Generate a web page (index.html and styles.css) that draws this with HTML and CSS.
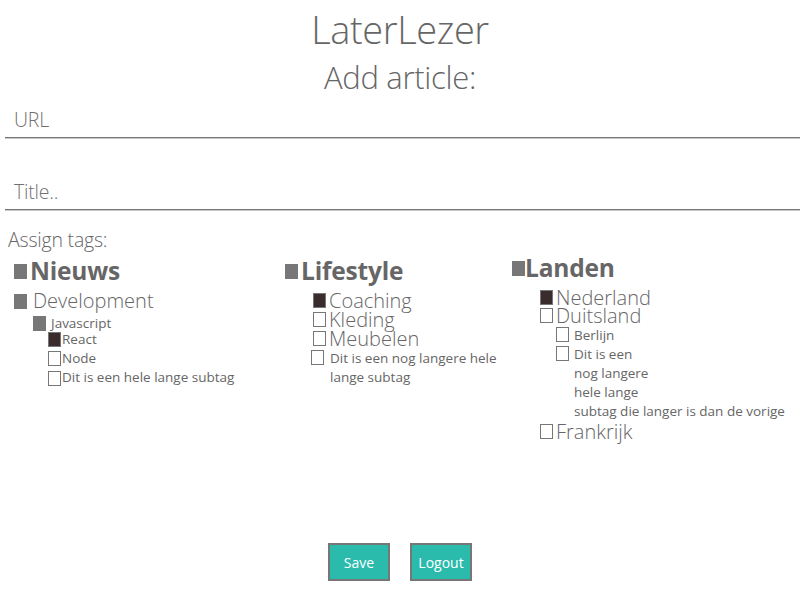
FILE: index.html
```html
<!DOCTYPE html>
<html>
<head>
<meta charset="utf-8">
<link rel="stylesheet" href="styles.css">
</head>
<body>
<h1 class="title">LaterLezer</h1>
<h2 class="subtitle">Add article:</h2>
<form class="form">
  <div class="field field-url"><span class="placeholder">URL</span></div>
  <div class="field field-title"><span class="placeholder">Title..</span></div>
  <p class="assign">Assign tags:</p>
  <div class="tags">
    <ul class="col col1">
      <li class="row l0"><span class="box grey"></span><span class="lbl">Nieuws</span></li>
      <li class="row l1"><span class="box grey"></span><span class="lbl">Development</span></li>
      <li class="row l2 js"><span class="box grey"></span><span class="lbl">Javascript</span></li>
      <li class="row l3 react"><span class="box dark"></span><span class="lbl">React</span></li>
      <li class="row l3"><span class="box"></span><span class="lbl">Node</span></li>
      <li class="row l3 top"><span class="box"></span><span class="lbl">Dit is een hele lange subtag</span></li>
    </ul>
    <ul class="col col2">
      <li class="row l0"><span class="box grey"></span><span class="lbl">Lifestyle</span></li>
      <li class="row m1 first"><span class="box dark"></span><span class="lbl">Coaching</span></li>
      <li class="row m1"><span class="box"></span><span class="lbl">Kleding</span></li>
      <li class="row m1"><span class="box"></span><span class="lbl">Meubelen</span></li>
      <li class="row m2"><span class="box"></span><span class="lbl">Dit is een nog langere hele lange subtag</span></li>
    </ul>
    <ul class="col col3">
      <li class="row l0"><span class="box grey"></span><span class="lbl">Landen</span></li>
      <li class="row m1 first"><span class="box dark"></span><span class="lbl">Nederland</span></li>
      <li class="row m1 second"><span class="box"></span><span class="lbl">Duitsland</span></li>
      <li class="row n2"><span class="box"></span><span class="lbl">Berlijn</span></li>
      <li class="row n2 long"><span class="box"></span><span class="lbl">Dit is een<br>nog langere<br>hele lange<br>subtag die langer is dan de vorige</span></li>
      <li class="row m1 last"><span class="box"></span><span class="lbl">Frankrijk</span></li>
    </ul>
  </div>
  <div class="actions">
    <button type="button" class="btn">Save</button>
    <button type="button" class="btn">Logout</button>
  </div>
</form>
</body>
</html>
```
FILE: styles.css
```css
html, body {
  margin: 0;
  padding: 0;
  background: #fff;
}
body {
  font-family: "Open Sans", "Noto Sans", sans-serif;
  color: #666;
  width: 800px;
  height: 600px;
  overflow: hidden;
}
.title {
  margin: 0;
  padding-top: 6px;
  text-align: center;
  font-weight: 300;
  font-size: 38px;
  line-height: 46px;
  letter-spacing: -0.4px;
}
.subtitle {
  margin: 7px 0 0;
  text-align: center;
  font-weight: 300;
  font-size: 31px;
  line-height: 36px;
  letter-spacing: -0.3px;
}
.form {
  margin: 0;
}
.field {
  margin-left: 5px;
  height: 35px;
  border-bottom: 1px solid #777;
  box-shadow: 0 1px 0 #c8c8c8;
  display: flex;
  align-items: center;
  padding-left: 9px;
}
.field-url {
  margin-top: 7px;
}
.field-title {
  margin-top: 36px;
}
.placeholder {
  font-size: 19.5px;
  font-weight: 300;
  color: #707070;
  letter-spacing: -0.2px;
}
.assign {
  margin: 17px 0 0 8px;
  font-size: 19.5px;
  font-weight: 300;
  line-height: 26px;
  letter-spacing: -0.2px;
}
.tags {
  display: grid;
  grid-template-columns: 271px 227px 1fr;
  padding-left: 14px;
  margin-top: 4px;
}
.col {
  list-style: none;
  margin: 0;
  padding: 0;
}
.row {
  display: flex;
  align-items: center;
}
.box {
  flex: none;
  width: 11px;
  height: 13px;
  border: 1px solid #777;
  background: #fff;
}
.box.grey {
  background: #777;
}
.box.dark {
  background: #3a2c2c;
}
.lbl {
  line-height: 1;
}
.l0 .lbl {
  font-size: 24.5px;
  font-weight: 700;
  margin-left: 3px;
  letter-spacing: -0.2px;
  line-height: 28px;
}
.col3 .l0 .lbl {
  margin-left: 0;
}
.l1 {
  margin-top: 4px;
}
.l1 .lbl {
  font-size: 20px;
  font-weight: 300;
  margin-left: 6px;
  line-height: 24px;
}
.l2 {
  padding-left: 19px;
  margin-top: 1px;
}
.l2 .lbl {
  font-size: 13.5px;
  margin-left: 5px;
  line-height: 19px;
}
.l3 {
  padding-left: 34px;
  margin-top: 3px;
}
.react {
  margin-top: -2px;
}
.l3 .lbl {
  font-size: 13.5px;
  margin-left: 1px;
  line-height: 16px;
}
.top {
  align-items: flex-start;
}
.top .box {
  margin-top: 2px;
}
.m1 {
  padding-left: 28px;
}
.m1 .lbl {
  font-size: 20px;
  font-weight: 300;
  margin-left: 3px;
  line-height: 19px;
}
.col2 .first {
  margin-top: 6px;
}
.col2 .m2 {
  margin-top: 1px;
}
.col3 .first {
  margin-top: 6px;
}
.col3 .second {
  margin-top: -1px;
}
.m2 {
  padding-left: 26px;
  align-items: flex-start;
}
.m2 .box {
  margin-top: 1px;
}
.m2 .lbl {
  font-size: 13.5px;
  margin-left: 6px;
  line-height: 19px;
  width: 185px;
}
.col3 .row.l0 {
  margin-top: -3px;
}
.n2 {
  padding-left: 44px;
  margin-top: 1px;
  align-items: flex-start;
}
.n2 .box {
  margin-top: 1px;
}
.n2 .lbl {
  font-size: 13.5px;
  margin-left: 5px;
  line-height: 19px;
}
.long {
  margin-top: 0;
}
.long .lbl {
  width: 240px;
}
.last {
  margin-top: 1px;
}
.actions {
  display: flex;
  justify-content: center;
  gap: 20px;
  position: absolute;
  left: 0;
  right: 0;
  top: 543px;
}
.btn {
  width: 62px;
  height: 38px;
  background: #2bbbad;
  border: 2px solid #777;
  color: #fff;
  font-family: "Open Sans", "Noto Sans", sans-serif;
  font-size: 14px;
  padding: 0;
}
```
